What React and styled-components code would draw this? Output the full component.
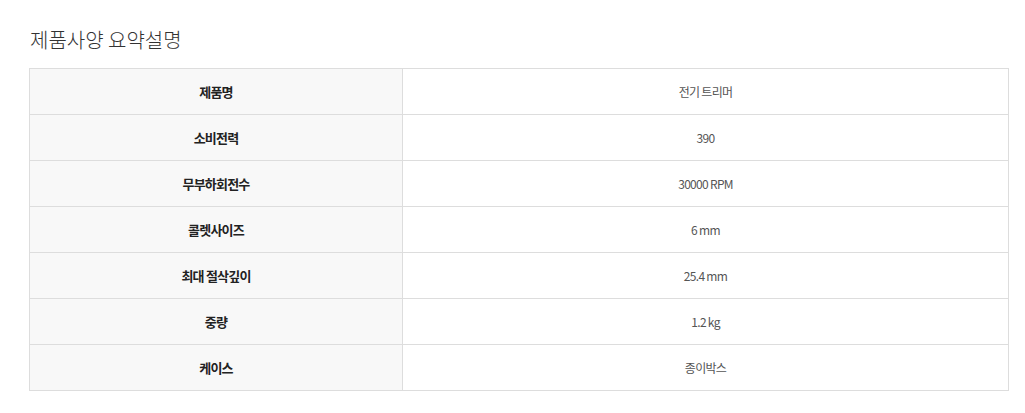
import React from "react";
import styled, { createGlobalStyle } from "styled-components";

const Global = createGlobalStyle`
  html, body { margin: 0; padding: 0; background: #fff; }
  body { font-family: "Noto Sans CJK KR", "Noto Sans", sans-serif; }
`;

const Wrap = styled.div`
  padding: 26px 16px 0 29px;
`;

const Title = styled.h2`
  margin: 0 0 14px 1px;
  font-size: 20px;
  font-weight: 300;
  color: #333;
  line-height: 28px;
  letter-spacing: 0;
`;

const Table = styled.table`
  width: 980px;
  border-collapse: collapse;
  table-layout: fixed;
  border: 1px solid #ddd;
`;

const Row = styled.tr`
  height: 46px;
  border-bottom: 1px solid #ddd;
`;

const Th = styled.th`
  width: 372px;
  background: #f8f8f8;
  border-right: 1px solid #ddd;
  font-size: 13px;
  font-weight: 700;
  color: #222;
  letter-spacing: -0.8px;
  text-align: center;
  padding: 0;
`;

const Td = styled.td`
  background: #fff;
  font-size: 12px;
  color: #555;
  letter-spacing: -0.7px;
  text-align: center;
  padding: 0;
`;

const rows = [
  ["제품명", "전기 트리머"],
  ["소비전력", "390"],
  ["무부하회전수", "30000 RPM"],
  ["콜렛사이즈", "6 mm"],
  ["최대 절삭깊이", "25.4 mm"],
  ["중량", "1.2 kg"],
  ["케이스", "종이박스"],
];

export default function App() {
  return (
    <Wrap>
      <Global />
      <Title>제품사양 요약설명</Title>
      <Table>
        <tbody>
          {rows.map(([k, v]) => (
            <Row key={k}>
              <Th>{k}</Th>
              <Td>{v}</Td>
            </Row>
          ))}
        </tbody>
      </Table>
    </Wrap>
  );
}
